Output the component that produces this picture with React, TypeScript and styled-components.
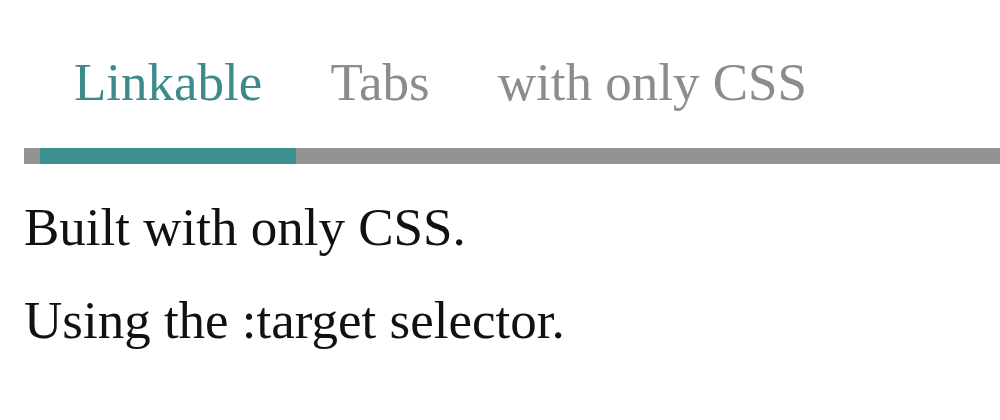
import React, { useState } from 'react';
import styled, { createGlobalStyle } from 'styled-components';

const GlobalStyle = createGlobalStyle`
  html, body {
    margin: 0;
    padding: 0;
    background: #ffffff;
  }
  body {
    font-family: "Liberation Serif", "Times New Roman", serif;
  }
`;

const Page = styled.div`
  padding: 52px 0 0 24px;
  overflow: hidden;
`;

const TabBar = styled.nav`
  display: flex;
  padding-left: 16px;
  box-shadow: inset 0 -16px 0 #939393;
`;

const TabLink = styled.a<{ $active?: boolean }>`
  display: block;
  padding: 0 34px 35px;
  font-size: 53px;
  line-height: 61px;
  white-space: nowrap;
  text-decoration: none;
  color: ${props => props.$active ? '#3d8a8b' : '#8c8c8c'};
  border-bottom: 16px solid ${props => props.$active ? '#3c9090' : 'transparent'};
  cursor: pointer;
`;

const Panel = styled.section`
  padding-top: 33px;
`;

const Line = styled.p`
  margin: 0 0 32px;
  font-size: 53px;
  line-height: 61px;
  color: #111111;
`;

const tabs = [
  { id: 'linkable', label: 'Linkable' },
  { id: 'tabs', label: 'Tabs' },
  { id: 'css', label: 'with only CSS' },
];

export default function App() {
  const [active, setActive] = useState('linkable');

  return (
    <Page>
      <GlobalStyle />
      <TabBar>
        {tabs.map(tab => (
          <TabLink
            key={tab.id}
            href={`#${tab.id}`}
            $active={active === tab.id}
            onClick={() => setActive(tab.id)}
          >
            {tab.label}
          </TabLink>
        ))}
      </TabBar>
      <Panel>
        <Line>Built with only CSS.</Line>
        <Line>Using the :target selector.</Line>
      </Panel>
    </Page>
  );
}
